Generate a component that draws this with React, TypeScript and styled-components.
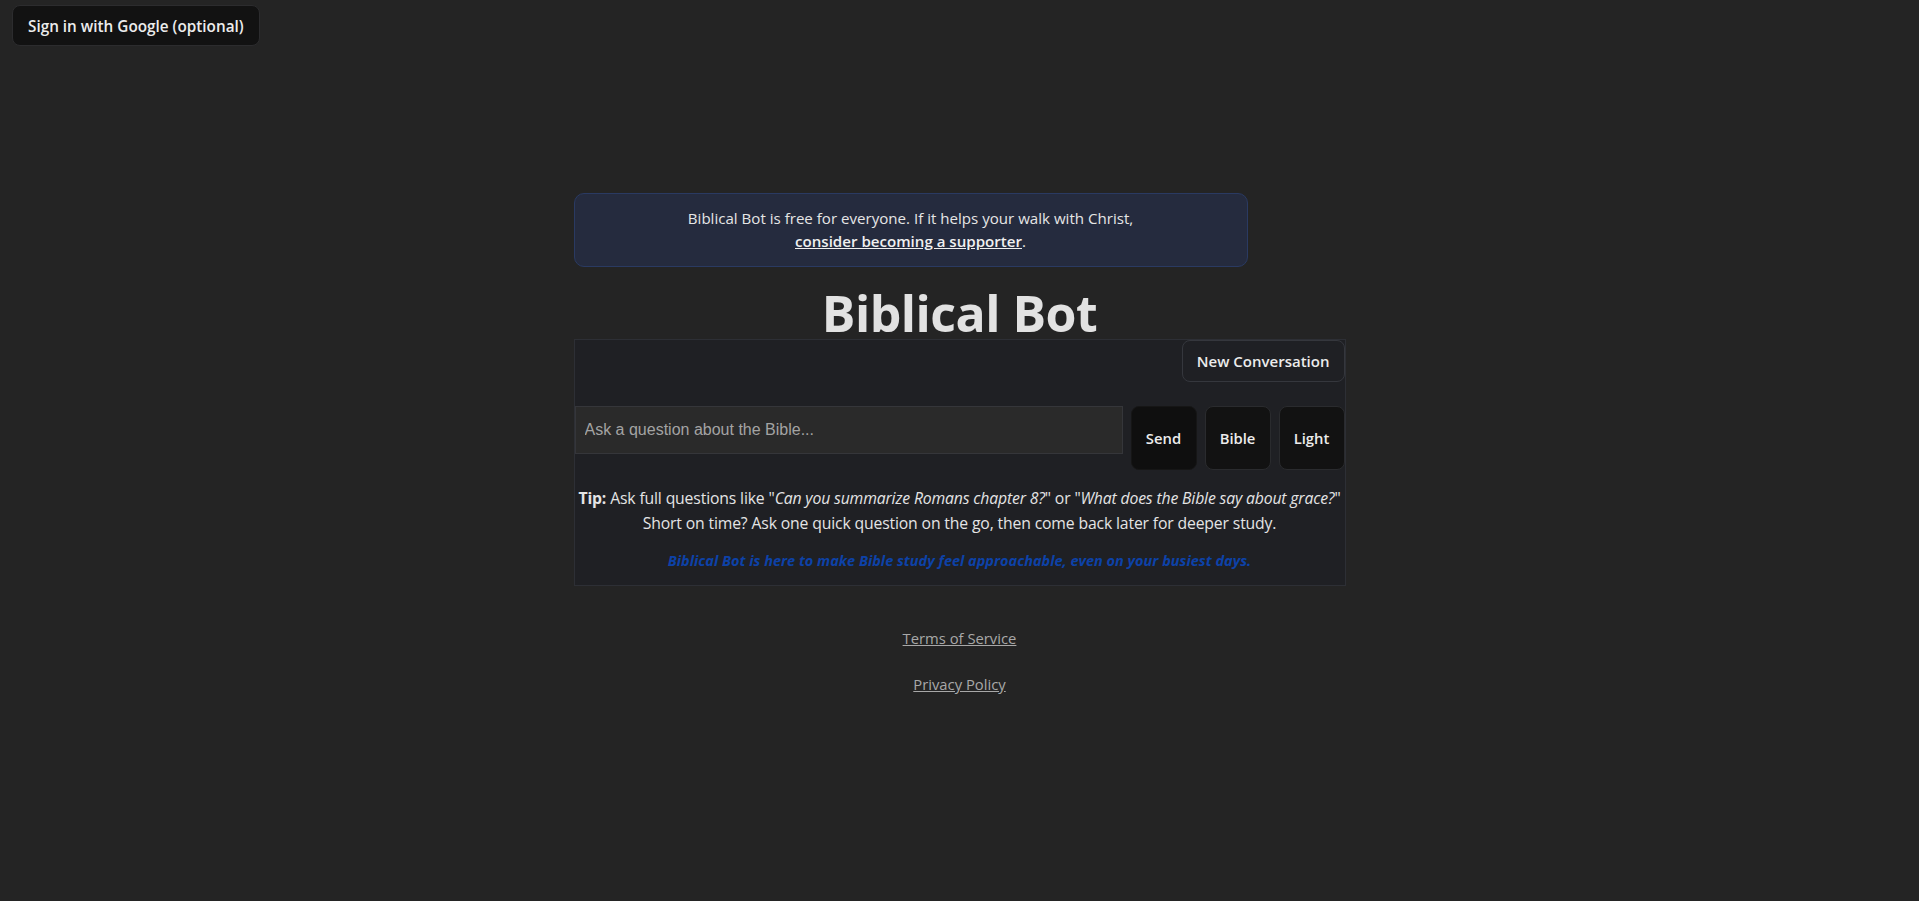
import React from "react";
import styled, { createGlobalStyle } from "styled-components";

const GlobalStyle = createGlobalStyle`
  html, body {
    margin: 0;
    padding: 0;
    background: #242424;
    color: rgba(255, 255, 255, 0.87);
    font-family: "Open Sans", "Noto Sans", sans-serif;
  }
  * { box-sizing: border-box; }
`;

const Page = styled.div`
  min-height: 100vh;
  position: relative;
  display: flex;
  justify-content: center;
  padding-top: 193px;
`;

const SignInButton = styled.button`
  position: absolute;
  top: 5px;
  left: 12px;
  height: 41px;
  padding: 0 15px;
  background: #121212;
  border: 1px solid #2c2c2e;
  border-radius: 8px;
  color: #ececec;
  font-family: inherit;
  font-weight: 600;
  font-size: 15.3px;
  cursor: pointer;
`;

const Column = styled.main`
  width: 772px;
  display: flex;
  flex-direction: column;
  align-items: center;
`;

const Banner = styled.div`
  align-self: flex-start;
  width: 674px;
  padding: 13px 16px;
  background: #252b3e;
  border: 1px solid #2a3a62;
  border-radius: 10px;
  text-align: center;
  font-size: 15.1px;
  line-height: 23px;
  color: #e6e6e6;
`;

const BannerLink = styled.a`
  color: #f0f0f0;
  font-weight: 600;
  text-decoration: underline;
`;

const Title = styled.h1`
  margin: 20px 0 0;
  font-size: 50px;
  line-height: 52px;
  font-weight: 700;
  color: #e2e2e2;
  letter-spacing: -0.5px;
`;

const ChatBox = styled.section`
  width: 100%;
  display: flex;
  flex-direction: column;
  background: #1f2024;
  border: 1px solid #2d2f35;
  padding-bottom: 14px;
`;

const TopRow = styled.div`
  display: flex;
  justify-content: flex-end;
`;

const OutlineButton = styled.button`
  height: 42px;
  padding: 0 14px;
  background: transparent;
  border: 1px solid #35373d;
  border-radius: 8px;
  color: #ececec;
  font-family: inherit;
  font-weight: 600;
  font-size: 15px;
  cursor: pointer;
`;

const InputRow = styled.div`
  display: flex;
  align-items: flex-start;
  gap: 8px;
  margin-top: 24px;
`;

const QuestionInput = styled.input`
  flex: 1;
  height: 48px;
  padding: 0 9px;
  background: #2a2a2a;
  border: 1px solid #35363a;
  color: #e0e0e0;
  font-family: "Liberation Sans", Arial, sans-serif;
  font-size: 16px;
  outline: none;
  &::placeholder {
    color: #a3a3a3;
  }
`;

const SquareButton = styled.button<{ $dim?: boolean }>`
  width: 66px;
  height: 64px;
  padding: 0;
  background: ${(p) => (p.$dim ? "#0f0f0f" : "#121212")};
  border: 1px solid ${(p) => (p.$dim ? "#161616" : "#2a2b2e")};
  border-radius: 8px;
  color: #ececec;
  font-family: inherit;
  font-weight: 600;
  font-size: 14.8px;
  cursor: pointer;
`;

const Tip = styled.p`
  margin: 16px 0 0;
  text-align: center;
  font-size: 15.75px;
  line-height: 25px;
  color: #e4e4e4;
  letter-spacing: -0.15px;
`;

const Blue = styled.p`
  margin: 15px 0 0;
  text-align: center;
  font-size: 14.5px;
  line-height: 20px;
  font-weight: 700;
  font-style: italic;
  color: #0d42a8;
`;

const Footer = styled.footer`
  display: flex;
  flex-direction: column;
  align-items: center;
  gap: 24px;
  margin-top: 41px;
`;

const FooterLink = styled.a`
  color: #a8a8a8;
  font-size: 14.8px;
  line-height: 22px;
  text-decoration: underline;
`;

export default function App() {
  return (
    <>
      <GlobalStyle />
      <Page>
        <SignInButton>Sign in with Google (optional)</SignInButton>
        <Column>
          <Banner>
            Biblical Bot is free for everyone. If it helps your walk with Christ,
            <br />
            <BannerLink href="#">consider becoming a supporter</BannerLink>.
          </Banner>
          <Title>Biblical Bot</Title>
          <ChatBox>
            <TopRow>
              <OutlineButton>New Conversation</OutlineButton>
            </TopRow>
            <InputRow>
              <QuestionInput placeholder="Ask a question about the Bible..." />
              <SquareButton $dim>Send</SquareButton>
              <SquareButton>Bible</SquareButton>
              <SquareButton>Light</SquareButton>
            </InputRow>
            <Tip>
              <strong>Tip:</strong> Ask full questions like "
              <em>Can you summarize Romans chapter 8?</em>" or "
              <em>What does the Bible say about grace?</em>"
              <br />
              Short on time? Ask one quick question on the go, then come back later for deeper study.
            </Tip>
            <Blue>Biblical Bot is here to make Bible study feel approachable, even on your busiest days.</Blue>
          </ChatBox>
          <Footer>
            <FooterLink href="#">Terms of Service</FooterLink>
            <FooterLink href="#">Privacy Policy</FooterLink>
          </Footer>
        </Column>
      </Page>
    </>
  );
}
